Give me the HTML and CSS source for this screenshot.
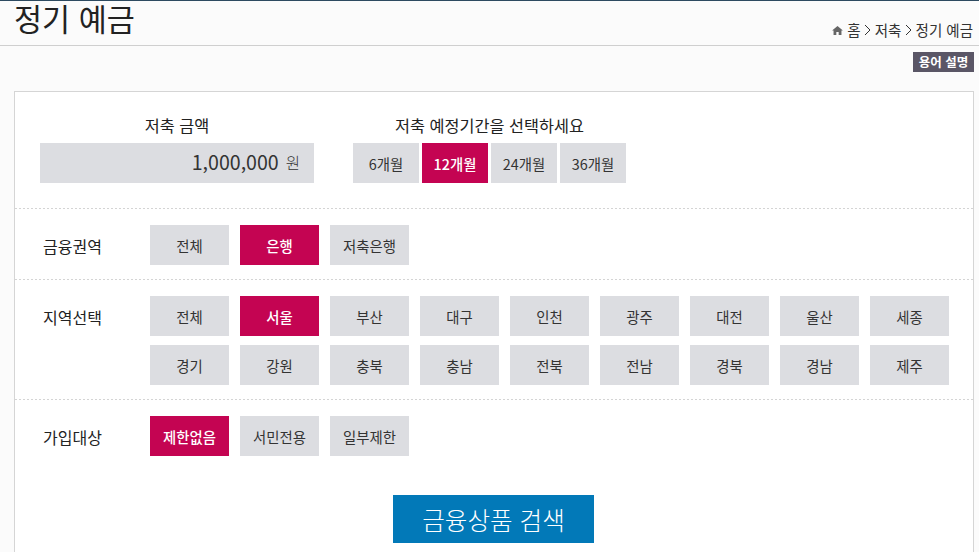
FILE: index.html
```html
<!DOCTYPE html>
<html lang="ko">
<head>
<meta charset="utf-8">
<title>정기 예금</title>
<link rel="stylesheet" href="styles.css">
</head>
<body>
<header class="page-head">
  <h1 class="page-title">정기 예금</h1>
  <nav class="crumbs">
    <svg class="home-icon" viewBox="0 0 12 10" width="11" height="9"><path d="M6 0 L12 5 L10.4 5 L10.4 10 L7.3 10 L7.3 6.6 L4.7 6.6 L4.7 10 L1.6 10 L1.6 5 L0 5 Z" fill="#666"/></svg>
    <span>홈</span>
    <svg class="chev" viewBox="0 0 7 12" width="7" height="12"><path d="M1 1 L6 6 L1 11" fill="none" stroke="#333" stroke-width="1"/></svg>
    <span>저축</span>
    <svg class="chev" viewBox="0 0 7 12" width="7" height="12"><path d="M1 1 L6 6 L1 11" fill="none" stroke="#333" stroke-width="1"/></svg>
    <span>정기 예금</span>
  </nav>
</header>
<div class="tools"><a class="glossary">용어 설명</a></div>
<main class="card">
  <section class="top-row">
    <div class="amount-col">
      <div class="col-label">저축 금액</div>
      <div class="amount"><span class="amount-num">1,000,000</span><span class="amount-unit">원</span></div>
    </div>
    <div class="period-col">
      <div class="col-label">저축 예정기간을 선택하세요</div>
      <div class="periods">
        <a class="btn period">6개월</a>
        <a class="btn period on">12개월</a>
        <a class="btn period">24개월</a>
        <a class="btn period">36개월</a>
      </div>
    </div>
  </section>
  <section class="row row-sector">
    <div class="row-label">금융권역</div>
    <div class="opts">
      <a class="btn">전체</a><a class="btn on">은행</a><a class="btn">저축은행</a>
    </div>
  </section>
  <section class="row row-region">
    <div class="row-label">지역선택</div>
    <div class="opts">
      <a class="btn">전체</a><a class="btn on">서울</a><a class="btn">부산</a><a class="btn">대구</a><a class="btn">인천</a><a class="btn">광주</a><a class="btn">대전</a><a class="btn">울산</a><a class="btn">세종</a>
      <a class="btn">경기</a><a class="btn">강원</a><a class="btn">충북</a><a class="btn">충남</a><a class="btn">전북</a><a class="btn">전남</a><a class="btn">경북</a><a class="btn">경남</a><a class="btn">제주</a>
    </div>
  </section>
  <section class="row row-target">
    <div class="row-label">가입대상</div>
    <div class="opts">
      <a class="btn on">제한없음</a><a class="btn">서민전용</a><a class="btn">일부제한</a>
    </div>
  </section>
  <div class="search-wrap"><a class="search">금융상품 검색</a></div>
</main>
</body>
</html>
```
FILE: styles.css
```css
html, body {
  margin: 0;
  height: 552px;
  overflow: hidden;
}
body {
  background: #fbfbfb;
  color: #222;
  font-family: "Noto Sans CJK KR", "Noto Sans", sans-serif;
  border-top: 1px solid #2d4a60;
  box-sizing: border-box;
}
.page-head {
  height: 44px;
  border-bottom: 1px solid #cfcfcf;
  display: flex;
  justify-content: space-between;
  align-items: flex-start;
  padding: 0 6px 0 14px;
}
.page-title {
  margin: 0;
  font-size: 30.5px;
  font-weight: 400;
  line-height: 34px;
  color: #222;
}
.crumbs {
  display: flex;
  align-items: center;
  gap: 3.6px;
  font-size: 14.5px;
  line-height: 18px;
  margin-top: 20px;
  color: #333;
}
.home-icon { margin-right: 1px; }
.glossary {
  display: block;
  background: #5a5666;
  color: #fff;
  font-size: 12.5px;
  font-weight: 700;
  line-height: 20px;
  height: 20px;
  width: 61px;
  text-align: center;
}
.tools {
  display: flex;
  justify-content: flex-end;
  padding: 6px 5px 0 0;
  height: 39px;
  box-sizing: border-box;
}
.card {
  margin: 6px 5px 0 14px;
  background: #fff;
  border: 1px solid #d5d5d5;
  height: 520px;
  box-sizing: border-box;
}
.top-row {
  display: flex;
  height: 116px;
  padding: 20px 0 0 25px;
  box-sizing: border-box;
  gap: 39px;
}
.col-label {
  text-align: center;
  font-size: 16.3px;
  line-height: 26px;
  height: 31px;
  color: #222;
}
.amount {
  width: 274px;
  height: 40px;
  background: #dcdde1;
  display: flex;
  justify-content: flex-end;
  align-items: center;
  gap: 7px;
  padding: 0 14px 3px 0;
  box-sizing: border-box;
  color: #333;
}
.amount-num { font-size: 19.6px; }
.amount-unit { font-size: 15.5px; font-weight: 300; }
.periods {
  display: flex;
  gap: 3px;
}
.row {
  background: repeating-linear-gradient(90deg, #d4d4d4 0 2px, transparent 2px 4px) top left / 100% 1px no-repeat;
  display: flex;
  box-sizing: border-box;
}
.row-sector { height: 71px; padding-top: 17px; }
.row-region { height: 120px; padding-top: 17px; }
.row-target { height: 95px; padding-top: 17px; }
.row-label {
  width: 135px;
  padding-left: 28px;
  box-sizing: border-box;
  font-size: 16px;
  line-height: 42px;
  color: #222;
  flex: none;
}
.opts {
  display: grid;
  grid-template-columns: repeat(9, 79px);
  grid-auto-rows: 40px;
  align-content: start;
  column-gap: 11px;
  row-gap: 9px;
}
.btn {
  display: block;
  height: 40px;
  line-height: 41px;
  background: #dcdde1;
  color: #333;
  font-size: 14.4px;
  text-align: center;
}
.period { width: 66px; }
.btn.on {
  background: #c40452;
  color: #fff;
  font-weight: 500;
}
.search-wrap {
  display: flex;
  justify-content: center;
  margin-top: 1px;
  padding-right: 1px;
}
.search {
  display: block;
  width: 201px;
  height: 48px;
  line-height: 48px;
  background: #0279b8;
  color: #fff;
  text-align: center;
  font-size: 24.6px;
  font-weight: 300;
}
```
